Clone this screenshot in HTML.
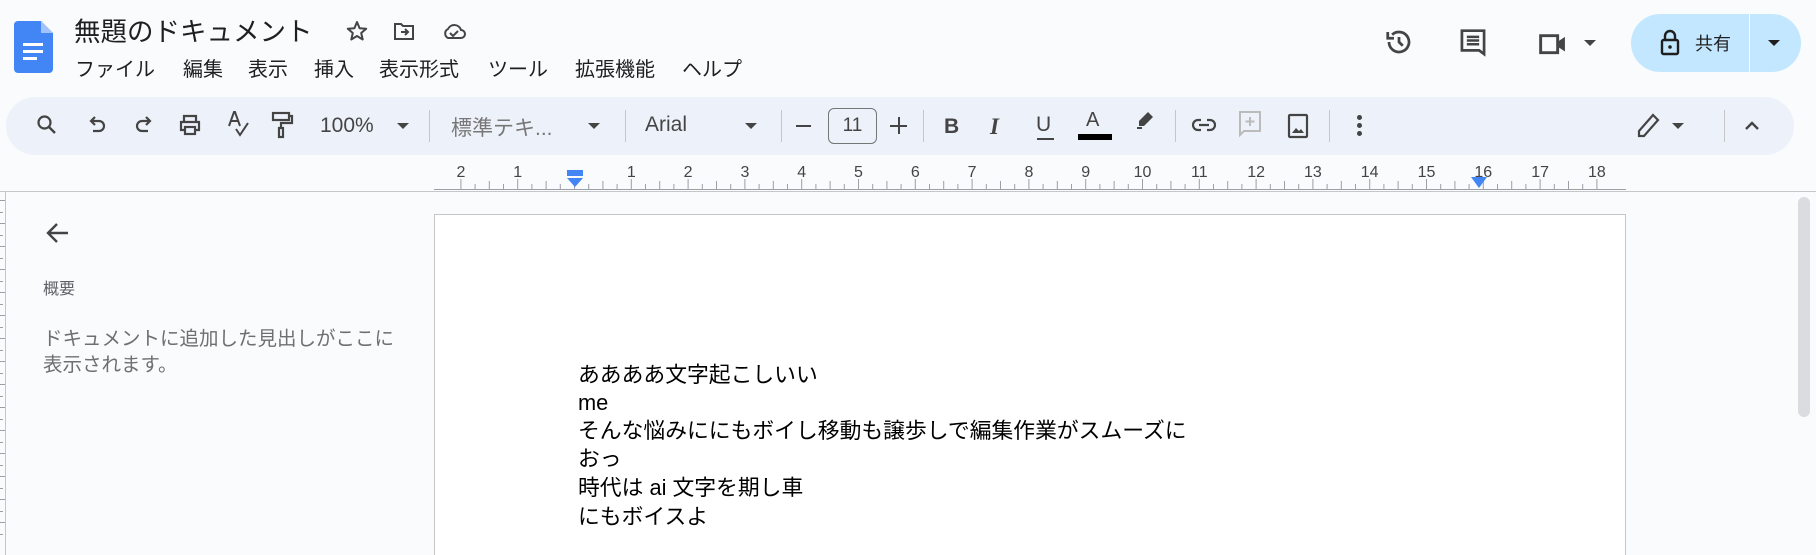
<!DOCTYPE html>
<html><head><meta charset="utf-8"><style>
*{margin:0;padding:0;box-sizing:border-box}
html,body{width:1816px;height:555px;overflow:hidden}
body{background:#f9fbfd;font-family:"Liberation Sans","Noto Sans CJK JP",sans-serif;color:#202124;position:relative}
.a{position:absolute}
.menu span{position:absolute;top:53px;font-size:20px;color:#1f1f1f;white-space:nowrap}
.tb{left:6px;top:97px;width:1788px;height:58px;background:#edf2fa;border-radius:29px}
.ic{position:absolute;top:113px}
.sep{position:absolute;top:110px;width:1px;height:32px;background:#c7c7c7}
.tri{position:absolute;width:0;height:0;border-left:6px solid transparent;border-right:6px solid transparent;border-top:6px solid #444}
.doc{position:absolute;left:578px;font-size:21.8px;line-height:28px;height:28px;color:#000;white-space:nowrap}
</style></head><body>
<svg class="a" style="left:14px;top:21px" width="39" height="52" viewBox="0 0 39 52"><path d="M4 0H27L39 12V48a4 4 0 0 1-4 4H4a4 4 0 0 1-4-4V4a4 4 0 0 1 4-4z" fill="#4285f4"/><path d="M27 0V12H39z" fill="#a1c2fa"/><rect x="9" y="22" width="20" height="3" fill="#fff"/><rect x="9" y="29" width="20" height="3" fill="#fff"/><rect x="9" y="36" width="14" height="3" fill="#fff"/></svg>
<div class="a" style="left:74px;top:10px;font-size:26.5px;color:#1f1f1f">無題のドキュメント</div>
<svg class="a" style="left:345px;top:19px" width="24" height="24" viewBox="0 0 24 24"><path d="M12 3l2.6 6.2 6.6.5-5 4.3 1.5 6.5L12 17l-5.7 3.5 1.5-6.5-5-4.3 6.6-.5z" fill="none" stroke="#444" stroke-width="2" stroke-linejoin="round"/></svg>
<svg class="a" style="left:392px;top:19px" width="24" height="24" viewBox="0 0 24 24"><path d="M3 5h6l2 2h10v13H3z" fill="none" stroke="#444" stroke-width="2"/><path d="M9 13h7M13 10l3 3-3 3" fill="none" stroke="#444" stroke-width="2"/></svg>
<svg class="a" style="left:441px;top:19px" width="26" height="24" viewBox="0 0 26 24"><path d="M7 19h13a4 4 0 0 0 0-8 7 7 0 0 0-13-1 5 5 0 0 0 0 9z" fill="none" stroke="#444" stroke-width="2"/><path d="M9 14l3 3 5-5" fill="none" stroke="#444" stroke-width="2"/></svg>
<div class="menu"><span style="left:75px">ファイル</span><span style="left:183px">編集</span><span style="left:248px">表示</span><span style="left:314px">挿入</span><span style="left:379px">表示形式</span><span style="left:488px">ツール</span><span style="left:575px">拡張機能</span><span style="left:682px">ヘルプ</span></div>
<svg class="a" style="left:1384px;top:27px" width="30" height="30" viewBox="0 0 24 24"><path d="M4 12a8 8 0 1 0 2.5-5.8" fill="none" stroke="#444" stroke-width="2.2"/><path d="M3 4v5h5" fill="none" stroke="#444" stroke-width="2.2"/><path d="M12 8v4l3 3" fill="none" stroke="#444" stroke-width="2.2"/></svg>
<svg class="a" style="left:1458px;top:27px" width="30" height="32" viewBox="0 0 24 26"><path d="M3 3h18v19l-4-3H3z" fill="none" stroke="#444" stroke-width="2.2"/><path d="M7 8h10M7 11h10M7 14h10" stroke="#444" stroke-width="2"/></svg>
<svg class="a" style="left:1537px;top:28px" width="34" height="30" viewBox="0 0 28 24"><path d="M3 6h14v14H3z" fill="none" stroke="#444" stroke-width="2.4"/><path d="M17 11l6-4v12l-6-4z" fill="#444"/></svg>
<div class="tri" style="left:1584px;top:40px"></div>
<div class="a" style="left:1631px;top:14px;width:170px;height:58px;background:#c2e7ff;border-radius:29px"></div>
<div class="a" style="left:1749px;top:14px;width:1px;height:58px;background:#fff"></div>
<svg class="a" style="left:1660px;top:29px" width="20" height="27" viewBox="0 0 20 27"><rect x="2" y="11" width="16" height="14" rx="1.5" fill="none" stroke="#1f1f1f" stroke-width="2.4"/><path d="M5 11V7a5 5 0 0 1 10 0v4" fill="none" stroke="#1f1f1f" stroke-width="2.4"/><circle cx="10" cy="18" r="1.8" fill="#1f1f1f"/></svg>
<div class="a" style="left:1695px;top:30px;font-size:18px;color:#1f1f1f">共有</div>
<div class="tri" style="left:1768px;top:40px;border-top-color:#1f1f1f"></div>
<div class="a tb"></div>
<svg class="ic" style="left:35px" width="24" height="24" viewBox="0 0 24 24"><circle cx="9.5" cy="9.5" r="6" fill="none" stroke="#444" stroke-width="2.2"/><path d="M14 14l6 6" stroke="#444" stroke-width="2.4"/></svg>
<svg class="ic" style="left:86px" width="22" height="24" viewBox="0 0 22 24"><path d="M6 8h7a5 5 0 0 1 0 10H7" fill="none" stroke="#444" stroke-width="2.2"/><path d="M9 4L5 8l4 4" fill="none" stroke="#444" stroke-width="2.2"/></svg>
<svg class="ic" style="left:133px" width="22" height="24" viewBox="0 0 22 24"><path d="M16 8H9a5 5 0 0 0 0 10h6" fill="none" stroke="#444" stroke-width="2.2"/><path d="M13 4l4 4-4 4" fill="none" stroke="#444" stroke-width="2.2"/></svg>
<svg class="ic" style="left:178px" width="24" height="24" viewBox="0 0 24 24"><path d="M6 8V3h12v5M6 17H3V9h18v8h-3" fill="none" stroke="#444" stroke-width="2.2"/><rect x="7" y="14" width="10" height="7" fill="none" stroke="#444" stroke-width="2.2"/></svg>
<svg class="ic" style="left:226px;top:109px" width="26" height="30" viewBox="0 0 26 30"><path d="M3 17L8 3h1l5 14M5 12h7" fill="none" stroke="#444" stroke-width="2"/><path d="M10 20l4 6 8-12" fill="none" stroke="#444" stroke-width="2"/></svg>
<svg class="ic" style="left:270px;top:111px" width="24" height="28" viewBox="0 0 24 28"><rect x="3" y="2" width="16" height="7" fill="none" stroke="#444" stroke-width="2.2"/><path d="M19 5h3v7H11v5" fill="none" stroke="#444" stroke-width="2.2"/><rect x="9" y="17" width="4" height="9" fill="none" stroke="#444" stroke-width="2.2"/></svg>
<div class="a" style="left:320px;top:114px;font-size:21px;color:#444">100%</div>
<div class="tri" style="left:397px;top:123px"></div>
<div class="sep" style="left:429px"></div>
<div class="a" style="left:451px;top:112px;font-size:21px;color:#777">標準テキ...</div>
<div class="tri" style="left:588px;top:123px"></div>
<div class="sep" style="left:625px"></div>
<div class="a" style="left:645px;top:113px;font-size:21px;color:#444">Arial</div>
<div class="tri" style="left:745px;top:123px"></div>
<div class="sep" style="left:781px"></div>
<div class="a" style="left:796px;top:125px;width:15px;height:2px;background:#444"></div>
<div class="a" style="left:828px;top:108px;width:49px;height:36px;border:1px solid #747775;border-radius:6px;font-size:19px;color:#444;text-align:center;line-height:34px">11</div>
<div class="a" style="left:890px;top:125px;width:17px;height:2px;background:#444"></div>
<div class="a" style="left:898px;top:117px;width:2px;height:17px;background:#444"></div>
<div class="sep" style="left:923px"></div>
<div class="a" style="left:944px;top:115px;font-size:21px;font-weight:bold;color:#444">B</div>
<div class="a" style="left:990px;top:114px;font-size:23px;font-style:italic;font-family:'Liberation Serif',serif;font-weight:bold;color:#444">I</div>
<div class="a" style="left:1036px;top:113px;font-size:21px;color:#444">U</div>
<div class="a" style="left:1037px;top:138px;width:17px;height:2px;background:#444"></div>
<div class="a" style="left:1086px;top:109px;font-size:20px;color:#444">A</div>
<div class="a" style="left:1078px;top:134px;width:34px;height:6px;background:#000"></div>
<svg class="ic" style="left:1133px;top:110px" width="22" height="24" viewBox="0 0 22 24"><path d="M15 2l5 5-9 9H6v-5z" fill="#444"/><path d="M4 18h5" stroke="#444" stroke-width="2"/></svg>
<div class="sep" style="left:1175px"></div>
<svg class="ic" style="left:1191px" width="26" height="24" viewBox="0 0 26 24"><path d="M10 7H7a5 5 0 0 0 0 10h3M16 7h3a5 5 0 0 1 0 10h-3M8 12h10" fill="none" stroke="#444" stroke-width="2.2"/></svg>
<svg class="ic" style="left:1238px;top:110px" width="24" height="28" viewBox="0 0 24 28"><path d="M2 2h20v19H6l-4 4z" fill="none" stroke="#bbb" stroke-width="2"/><path d="M12 7v9M7.5 11.5h9" stroke="#bbb" stroke-width="2"/></svg>
<svg class="ic" style="left:1287px" width="22" height="26" viewBox="0 0 22 26"><rect x="2" y="2" width="18" height="22" rx="1" fill="none" stroke="#444" stroke-width="2.2"/><path d="M5 20l4-5 3 3 2-2 3 4z" fill="#444"/></svg>
<div class="sep" style="left:1329px"></div>
<div class="a" style="left:1357px;top:115px;width:5px;height:5px;border-radius:50%;background:#444;box-shadow:0 8px 0 #444,0 16px 0 #444"></div>
<svg class="ic" style="left:1635px;top:112px" width="26" height="28" viewBox="0 0 26 28"><path d="M18 3l5 5L9 24H4v-5z" fill="none" stroke="#444" stroke-width="2.2"/></svg>
<div class="tri" style="left:1672px;top:123px"></div>
<div class="sep" style="left:1724px"></div>
<svg class="ic" style="left:1743px;top:118px" width="18" height="14" viewBox="0 0 18 14"><path d="M3 11l6-6 6 6" fill="none" stroke="#444" stroke-width="2.4"/></svg>
<svg class="a" style="left:0;top:160px" width="1816" height="395" viewBox="0 160 1816 395">
<line x1="434" y1="189.5" x2="1626" y2="189.5" stroke="#9aa0a6"/>
<g stroke="#9aa0a6" id="ticks"></g>
<line x1="0" y1="191.5" x2="1816" y2="191.5" stroke="#c4c7c5"/>
<line x1="5.5" y1="191" x2="5.5" y2="555" stroke="#c4c7c5"/>
<rect x="434.5" y="214.5" width="1191" height="360" fill="#fff" stroke="#c4c7c5"/>
<rect x="1798" y="197" width="12" height="220" rx="6" fill="#dadce0"/>
</svg>
<div class="a" id="rn" style="left:0;top:164px;font-size:16px;color:#444;font-family:'Liberation Sans',sans-serif"></div>
<svg class="a" style="left:566px;top:170px" width="18" height="18" viewBox="0 0 18 18"><rect x="1" y="0" width="16" height="6" fill="#4285f4"/><path d="M1 8h16l-8 9z" fill="#4285f4"/></svg>
<svg class="a" style="left:1471px;top:177px" width="16" height="12" viewBox="0 0 16 12"><path d="M0 0h16l-8 11z" fill="#4285f4"/></svg>
<svg class="a" style="left:44px;top:219px" width="28" height="28" viewBox="0 0 28 28"><path d="M24 14H4M13 5l-9 9 9 9" fill="none" stroke="#444" stroke-width="2.4"/></svg>
<div class="a" style="left:43px;top:275px;font-size:16px;color:#5f6368">概要</div>
<div class="a" style="left:43px;top:326px;font-size:19.5px;color:#6f6f6f;line-height:26px;white-space:nowrap">ドキュメントに追加した見出しがここに<br>表示されます。</div>
<div class="doc" style="top:361px">ああああ文字起こしいい</div>
<div class="doc" style="top:389px">me</div>
<div class="doc" style="top:417px">そんな悩みににもボイし移動も譲歩しで編集作業がスムーズに</div>
<div class="doc" style="top:445px">おっ</div>
<div class="doc" style="top:474px">時代は ai 文字を期し車</div>
<div class="doc" style="top:503px">にもボイスよ</div>
<script>
var g=document.getElementById('ticks'),s='',step=56.8/4,z=574.5;
for(var i=-8;i<=72;i++){var x=z+i*step;if(x<434||x>1626)continue;var h=(i%4==0)?10:(i%2==0?8:5);s+='<line x1="'+x+'" y1="'+(189-h)+'" x2="'+x+'" y2="189"/>';}
g.innerHTML=s;
var rn=document.getElementById('rn'),t='';
var labs=[[-2,'2'],[-1,'1']];for(var k=1;k<=18;k++)labs.push([k,''+k]);
labs.forEach(function(l){var x=z+l[0]*56.8;t+='<span style="position:absolute;left:'+(x-12)+'px;width:24px;text-align:center">'+l[1]+'</span>';});
rn.innerHTML=t;
for(var j=0;j<30;j++){var d=document.createElement('div');d.className='a';d.style.cssText='left:0;top:'+(200+j*11.5)+'px;width:'+(j%2?3:5)+'px;height:1px;background:#9aa0a6';document.body.appendChild(d);}
</script>
</body></html>
